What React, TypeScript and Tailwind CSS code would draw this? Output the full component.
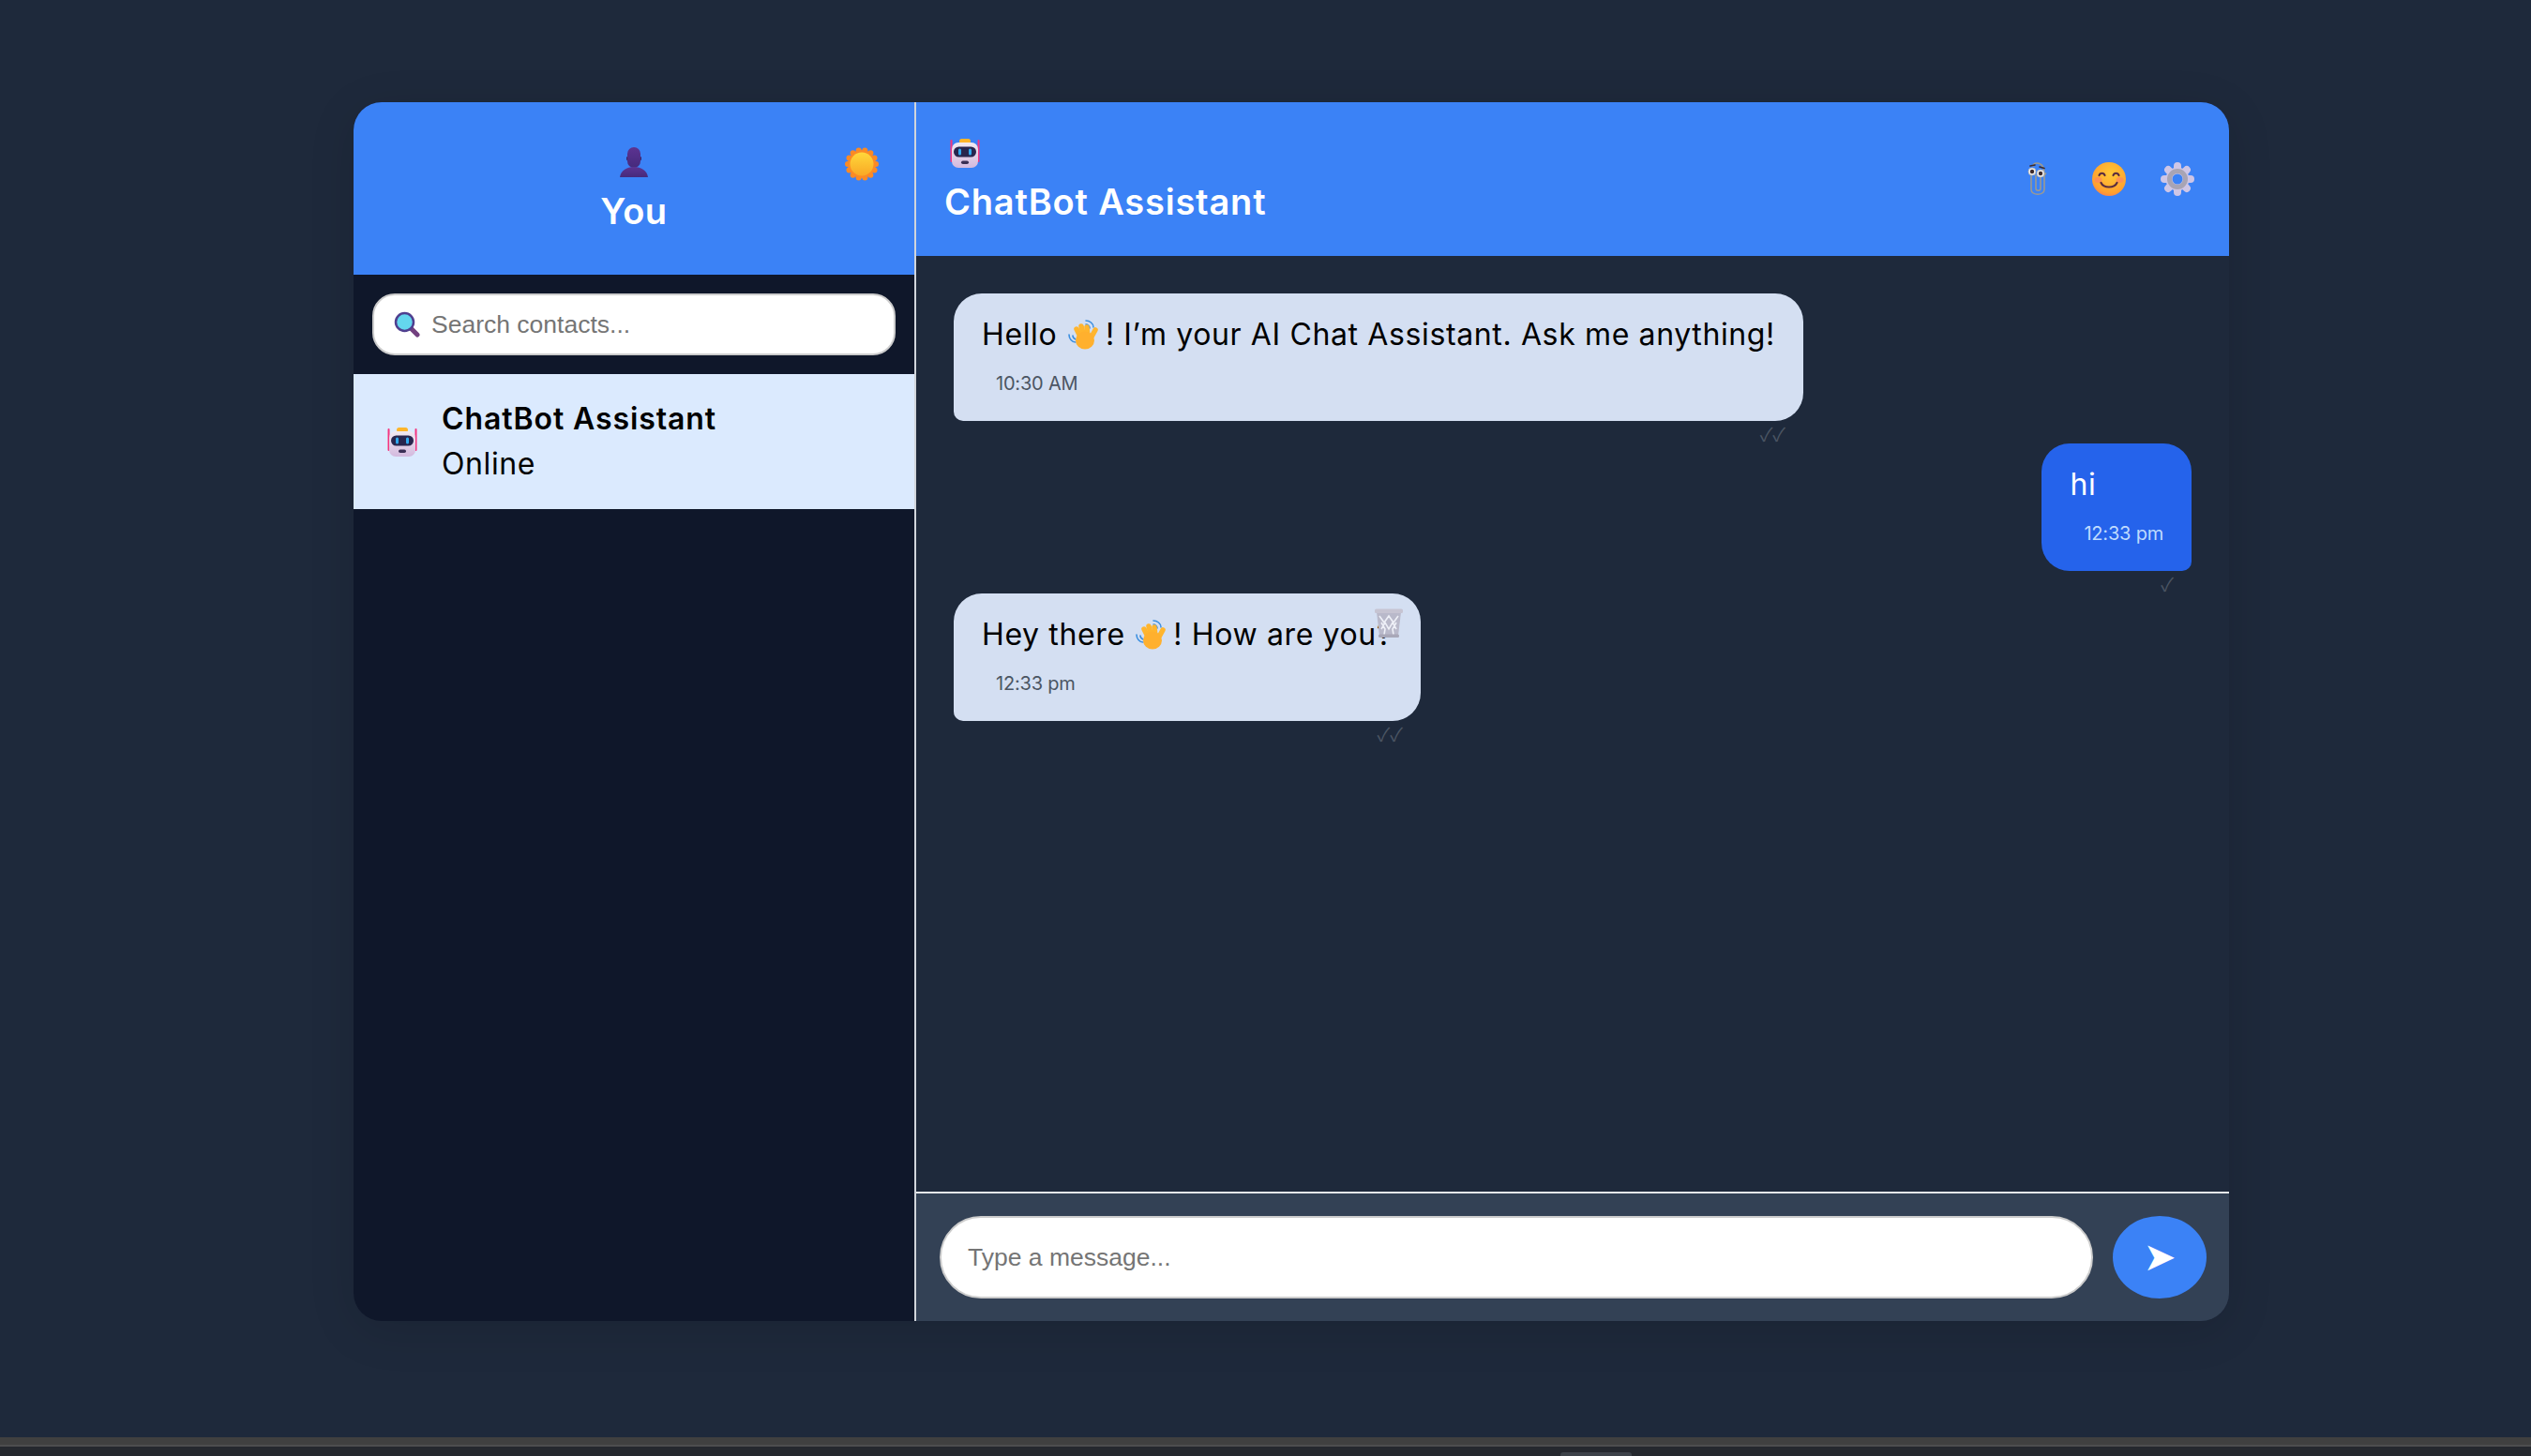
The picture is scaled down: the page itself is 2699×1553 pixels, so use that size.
import React from 'react';

const PersonIcon: React.FC = () => (
  <svg width="32" height="32" viewBox="0 0 32 32">
    <defs>
      <linearGradient id="personFill" x1="0" y1="0" x2="0" y2="1">
        <stop offset="0" stopColor="#5c3391" />
        <stop offset="1" stopColor="#452a7c" />
      </linearGradient>
    </defs>
    <ellipse cx="9.5" cy="12" rx="1.5" ry="2.5" fill="#38205f" />
    <ellipse cx="22.5" cy="12" rx="1.5" ry="2.5" fill="#38205f" />
    <rect x="9" y="0" width="14" height="22" rx="7" fill="url(#personFill)" />
    <path d="M1 32C2 25 8 21 16 21s14 4 15 11z" fill="url(#personFill)" />
  </svg>
);

const SunIcon: React.FC = () => {
  const bumps = Array.from({ length: 14 }, (_, i) => (i * Math.PI * 2) / 14);
  return (
    <svg width="36" height="36" viewBox="0 0 36 36">
      <defs>
        <linearGradient id="sunFill" x1="0" y1="0" x2="0" y2="1">
          <stop offset="0" stopColor="#ffd83b" />
          <stop offset="1" stopColor="#f9a825" />
        </linearGradient>
      </defs>
      {bumps.map(a => (
        <circle key={a} cx={18 + Math.cos(a) * 15} cy={18 + Math.sin(a) * 15} r="3" fill="#fb8a25" />
      ))}
      <circle cx="18" cy="18" r="15" fill="#fb8a25" />
      <circle cx="18" cy="18" r="12.5" fill="url(#sunFill)" />
    </svg>
  );
};

const SearchIcon: React.FC = () => (
  <svg width="28" height="28" viewBox="0 0 28 28">
    <line x1="18" y1="18" x2="25" y2="25" stroke="#73407f" strokeWidth="5" strokeLinecap="round" />
    <circle cx="11.5" cy="11.5" r="9.5" fill="#64d6ee" stroke="#4f3f8f" strokeWidth="2.5" />
  </svg>
);

const RobotIcon: React.FC = () => (
  <svg width="32" height="32" viewBox="0 0 32 32">
    <defs>
      <linearGradient id="robotFill" x1="0" y1="0" x2="0" y2="1">
        <stop offset="0" stopColor="#f1e9f1" />
        <stop offset="1" stopColor="#d3b9de" />
      </linearGradient>
    </defs>
    <rect x="0.5" y="2" width="2" height="24" rx="1" fill="#f5357f" />
    <rect x="29.5" y="2" width="2" height="24" rx="1" fill="#f5357f" />
    <rect x="10" y="1" width="12" height="5" rx="2.5" fill="#fdb52a" />
    <rect x="2" y="5" width="28" height="27" rx="7" fill="url(#robotFill)" />
    <rect x="4" y="9.5" width="24" height="11" rx="5.5" fill="#27254d" />
    <rect x="9" y="11.5" width="3" height="7" rx="1.5" fill="#2fa8ee" />
    <rect x="20" y="11.5" width="3" height="7" rx="1.5" fill="#2fa8ee" />
    <rect x="12" y="24.5" width="8" height="3.5" rx="1.75" fill="#3a2f55" />
  </svg>
);

const ClipIcon: React.FC = () => (
  <svg width="22" height="36" viewBox="0 0 22 36">
    <path
      d="M4 14v15c0 7 14 7 14 0V13c0-5-1-12-8-12-3 0-4 2-4 3M9 14v14c0 3 5 3 5 0V14M18 14l1.5-2"
      fill="none"
      stroke="#9b9a92"
      strokeWidth="1.6"
      strokeLinecap="round"
    />
    <circle cx="5" cy="10" r="4" fill="#f4f4f4" stroke="#b5b5b5" strokeWidth="0.8" />
    <circle cx="5" cy="10" r="2.2" fill="#3d2a2a" />
    <circle cx="14" cy="12" r="4" fill="#f4f4f4" stroke="#b5b5b5" strokeWidth="0.8" />
    <circle cx="14" cy="12" r="2.2" fill="#3d2a2a" />
    <path d="M3 4l5-1M13 5l5 1.5" stroke="#3d2a2a" strokeWidth="1.6" strokeLinecap="round" />
  </svg>
);

const SmileIcon: React.FC = () => (
  <svg width="36" height="36" viewBox="0 0 36 36">
    <defs>
      <radialGradient id="smileFill" cx="0.55" cy="0.35" r="0.75">
        <stop offset="0" stopColor="#ffc935" />
        <stop offset="0.75" stopColor="#ffa02f" />
        <stop offset="1" stopColor="#f96f5d" />
      </radialGradient>
    </defs>
    <circle cx="18" cy="18" r="18" fill="url(#smileFill)" />
    <ellipse cx="6.5" cy="19" rx="4" ry="3" fill="#ff7a6b" opacity="0.55" />
    <ellipse cx="29.5" cy="19" rx="4" ry="3" fill="#ff7a6b" opacity="0.55" />
    <path
      d="M7.5 14c1-3 5-3 6 0M22.5 14c1-3 5-3 6 0M9.5 22c3 6 14 6 17 0"
      fill="none"
      stroke="#5a2d3f"
      strokeWidth="2.2"
      strokeLinecap="round"
    />
  </svg>
);

const GearIcon: React.FC = () => {
  const teeth = [0, 45, 90, 135, 180, 225, 270, 315];
  return (
    <svg width="36" height="36" viewBox="0 0 36 36">
      {teeth.map(t => (
        <rect key={t} x="14" y="0" width="8" height="14" rx="4" fill="#cfc6e6" transform={`rotate(${t} 18 18)`} />
      ))}
      <circle cx="18" cy="18" r="12.5" fill="#cfc6e6" />
      <circle cx="18" cy="18" r="8.5" fill="none" stroke="#a8a4b4" strokeWidth="5" />
      <circle cx="18" cy="18" r="5.5" fill="#3b82f6" />
    </svg>
  );
};

const WaveIcon: React.FC = () => (
  <svg width="33" height="33" viewBox="0 0 33 33" className="mr-[7px] ml-[2px] inline-block align-[-6px]">
    <path d="M19 1c4 0 8 3 8 7M19 5c2 0 4 2 4 4M1 16c0 4 3 8 7 8M5 17c0 2 1 3 3 4" fill="none" stroke="#3c8fe0" strokeWidth="1.6" strokeLinecap="round" />
    <g stroke="#ffb52e" strokeWidth="5.5" strokeLinecap="round">
      <line x1="14" y1="20" x2="9" y2="10" />
      <line x1="17" y1="18" x2="14" y2="7" />
      <line x1="21" y1="18" x2="20" y2="8" />
      <line x1="24" y1="20" x2="29" y2="11" />
    </g>
    <ellipse cx="18" cy="22" rx="10" ry="9.5" fill="#ffb02e" />
  </svg>
);

const TrashIcon: React.FC = () => (
  <svg width="32" height="32" viewBox="0 0 32 32">
    <path d="M3 4h26l-3 25H6z" fill="#b9b9ca" />
    <path d="M6 8l5 7 5-7 5 7 5-7M8 22l4-7 4 7 4-7 4 7M8 15l4 7-1 6M24 15l-4 7 1 6" fill="none" stroke="#eef0f7" strokeWidth="1.6" />
    <rect x="1" y="0.5" width="30" height="4.5" rx="1.5" fill="#c6c4d2" />
    <rect x="5" y="27.5" width="22" height="3.5" rx="1.5" fill="#a9a8b8" />
  </svg>
);

const Message: React.FC<{
  mine?: boolean;
  ticks: string;
  time: string;
  trash?: boolean;
  children: React.ReactNode;
}> = ({ mine, ticks, time, trash, children }) => (
  <div className={mine ? 'flex justify-end' : 'flex justify-start'}>
    <div>
      <div
        className={
          mine
            ? 'relative rounded-[30px] rounded-br-[10px] bg-[#2563eb] px-[30px] pt-[20px] pb-[25px] text-white'
            : 'relative rounded-[30px] rounded-bl-[10px] bg-[#d4dff2] px-[30px] pt-[20px] pb-[25px] text-black'
        }
      >
        <p className="text-[32px] leading-[48px] tracking-[0.63px] whitespace-nowrap">{children}</p>
        <p className={mine ? 'mt-[13px] pl-[15px] text-[20px] leading-[30px] tracking-[-0.2px] text-[#bfdbfe]' : 'mt-[13px] pl-[15px] text-[20px] leading-[30px] tracking-[-0.2px] text-[#4b5563]'}>
          {time}
        </p>
        {trash && (
          <div className="absolute top-[16px] right-[18px]">
            <TrashIcon />
          </div>
        )}
      </div>
      <div className="h-[24px] pt-[2px] pr-[19px] text-right font-['Noto_Sans_CJK_JP','DejaVu_Sans',sans-serif] text-[20px] leading-[24px] text-[#4b5563]">
        {ticks}
      </div>
    </div>
  </div>
);

const App: React.FC = () => {
  return (
    <div className="flex h-[1553px] flex-col overflow-hidden bg-[#1e293b] font-['Inter',sans-serif]">
      <div className="flex-1 pt-[109px]">
        {/* Chat card */}
        <div className="ml-[377px] flex h-[1300px] w-[2000px] overflow-hidden rounded-[30px] shadow-[0_10px_50px_rgba(0,0,0,0.12)]">
          {/* Sidebar */}
          <aside className="flex w-[600px] flex-col border-r-2 border-[#d1d5db] bg-[#0f172a]">
            <div className="relative h-[184px] bg-[#3b82f6] pt-[48px] text-center text-white">
              <div className="flex justify-center">
                <PersonIcon />
              </div>
              <h2 className="mt-[9px] text-[38px] leading-[54px] font-semibold tracking-[0.5px]">You</h2>
              <div className="absolute top-[48px] right-[38px]">
                <SunIcon />
              </div>
            </div>
            <div className="p-[20px]">
              <div className="relative">
                <div className="absolute top-[19px] left-[23px]">
                  <SearchIcon />
                </div>
                <input
                  placeholder="Search contacts..."
                  className="h-[66px] w-full rounded-[24px] border-2 border-[#cccccc] bg-white pl-[61px] font-['Liberation_Sans',sans-serif] text-[26.5px] outline-none placeholder:text-[#757575]"
                />
              </div>
            </div>
            <div className="flex items-center gap-[26px] bg-[#dbeafe] py-[24px] pl-[36px] text-black">
              <RobotIcon />
              <div>
                <div className="text-[32px] leading-[48px] font-semibold tracking-[0.9px]">ChatBot Assistant</div>
                <div className="text-[32px] leading-[48px] tracking-[0.6px]">Online</div>
              </div>
            </div>
          </aside>

          {/* Conversation */}
          <main className="flex flex-1 flex-col bg-[#1e293b]">
            <header className="flex h-[164px] justify-between bg-[#3b82f6] pr-[37px] pl-[30px] text-white">
              <div className="pt-[38px]">
                <div className="ml-[6px]">
                  <RobotIcon />
                </div>
                <h2 className="mt-[8px] text-[38px] leading-[56px] font-semibold tracking-[0.8px]">ChatBot Assistant</h2>
              </div>
              <div className="flex items-center gap-[37px]">
                <div className="mr-[10px] flex">
                  <ClipIcon />
                </div>
                <SmileIcon />
                <GearIcon />
              </div>
            </header>

            <div className="flex-1 p-[40px]">
              <Message ticks="✓✓" time="10:30 AM">
                Hello <WaveIcon />! I’m your AI Chat Assistant. Ask me anything!
              </Message>
              <Message mine ticks="✓" time="12:33 pm">
                hi
              </Message>
              <Message ticks="✓✓" time="12:33 pm" trash>
                Hey there <WaveIcon />! How are you?
              </Message>
            </div>

            <div className="flex items-center gap-[21px] border-t-2 border-[#e5e7eb] bg-[#334155] py-[24px] pr-[24px] pl-[25px]">
              <input
                placeholder="Type a message..."
                className="h-[88px] flex-1 rounded-full border-2 border-[#cccccc] bg-white pl-[28px] font-['Liberation_Sans',sans-serif] text-[26.5px] outline-none placeholder:text-[#757575]"
              />
              <button className="h-[88px] w-[100px] rounded-[50%] bg-[#3b82f6] font-['DejaVu_Sans',sans-serif] text-[42px] leading-[88px] text-white">
                ➤
              </button>
            </div>
          </main>
        </div>
      </div>

      {/* Strip of the window below the page */}
      <div className="h-[20px] bg-[#25282e]">
        <div className="h-[8px] bg-[#404040]" />
        <div className="h-[2px] bg-[#4d4d4f]" />
        <div className="mt-[6px] ml-[1664px] h-[4px] w-[76px] rounded-t-[3px] bg-[#3d4249]" />
      </div>
    </div>
  );
};

export default App;
